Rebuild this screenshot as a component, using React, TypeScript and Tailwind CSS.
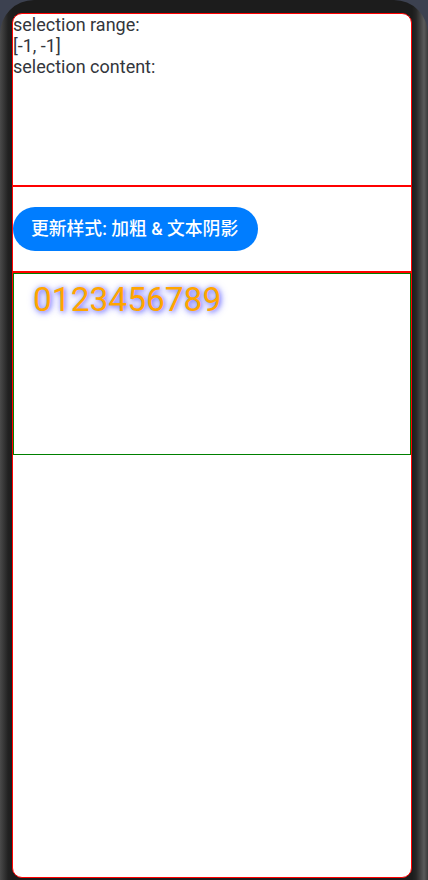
export default function App() {
  return (
    <div className="w-[428px] h-[880px] bg-[#3c4150] overflow-hidden font-['Roboto','Noto_Sans_CJK_SC',sans-serif]">
      {/* Device body */}
      <div className="h-full rounded-t-[34px] bg-[linear-gradient(90deg,#4a4a4a_0px,#222_8px,#1c1c1c_12px,#1c1c1c_412px,#262626_416px,#5a5a5a_424px,#3a3a3a_428px)] pl-[12px] pr-[16px] pt-[13px]">
        {/* Screen */}
        <div className="w-[400px] h-[865px] bg-white border border-[#ff0000] rounded-[10px] overflow-hidden flex flex-col">
          {/* Selection info */}
          <div className="h-[171px] text-[18px] leading-[21px] text-[#33363c]">
            <p>selection range:</p>
            <p>[-1, -1]</p>
            <p>selection content:</p>
          </div>

          {/* Button row */}
          <div className="h-[88px] border-y-2 border-[#ff0000] flex items-center">
            <button className="h-[44px] w-[245px] rounded-full bg-[#007dff] text-white text-[17.8px] font-medium pl-[18px] text-left whitespace-nowrap">
              更新样式: 加粗 &amp; 文本阴影
            </button>
          </div>

          {/* Styled text area */}
          <div className="w-[398px] h-[182px] border border-[#008000] pl-[19px] pt-[6px]">
            <span className="text-[33.5px] leading-[40px] text-[#ffa500] [text-shadow:1px_1px_5px_#6a6aff,1px_1px_9px_#9c9cff]">
              0123456789
            </span>
          </div>
        </div>
      </div>
    </div>
  );
}
